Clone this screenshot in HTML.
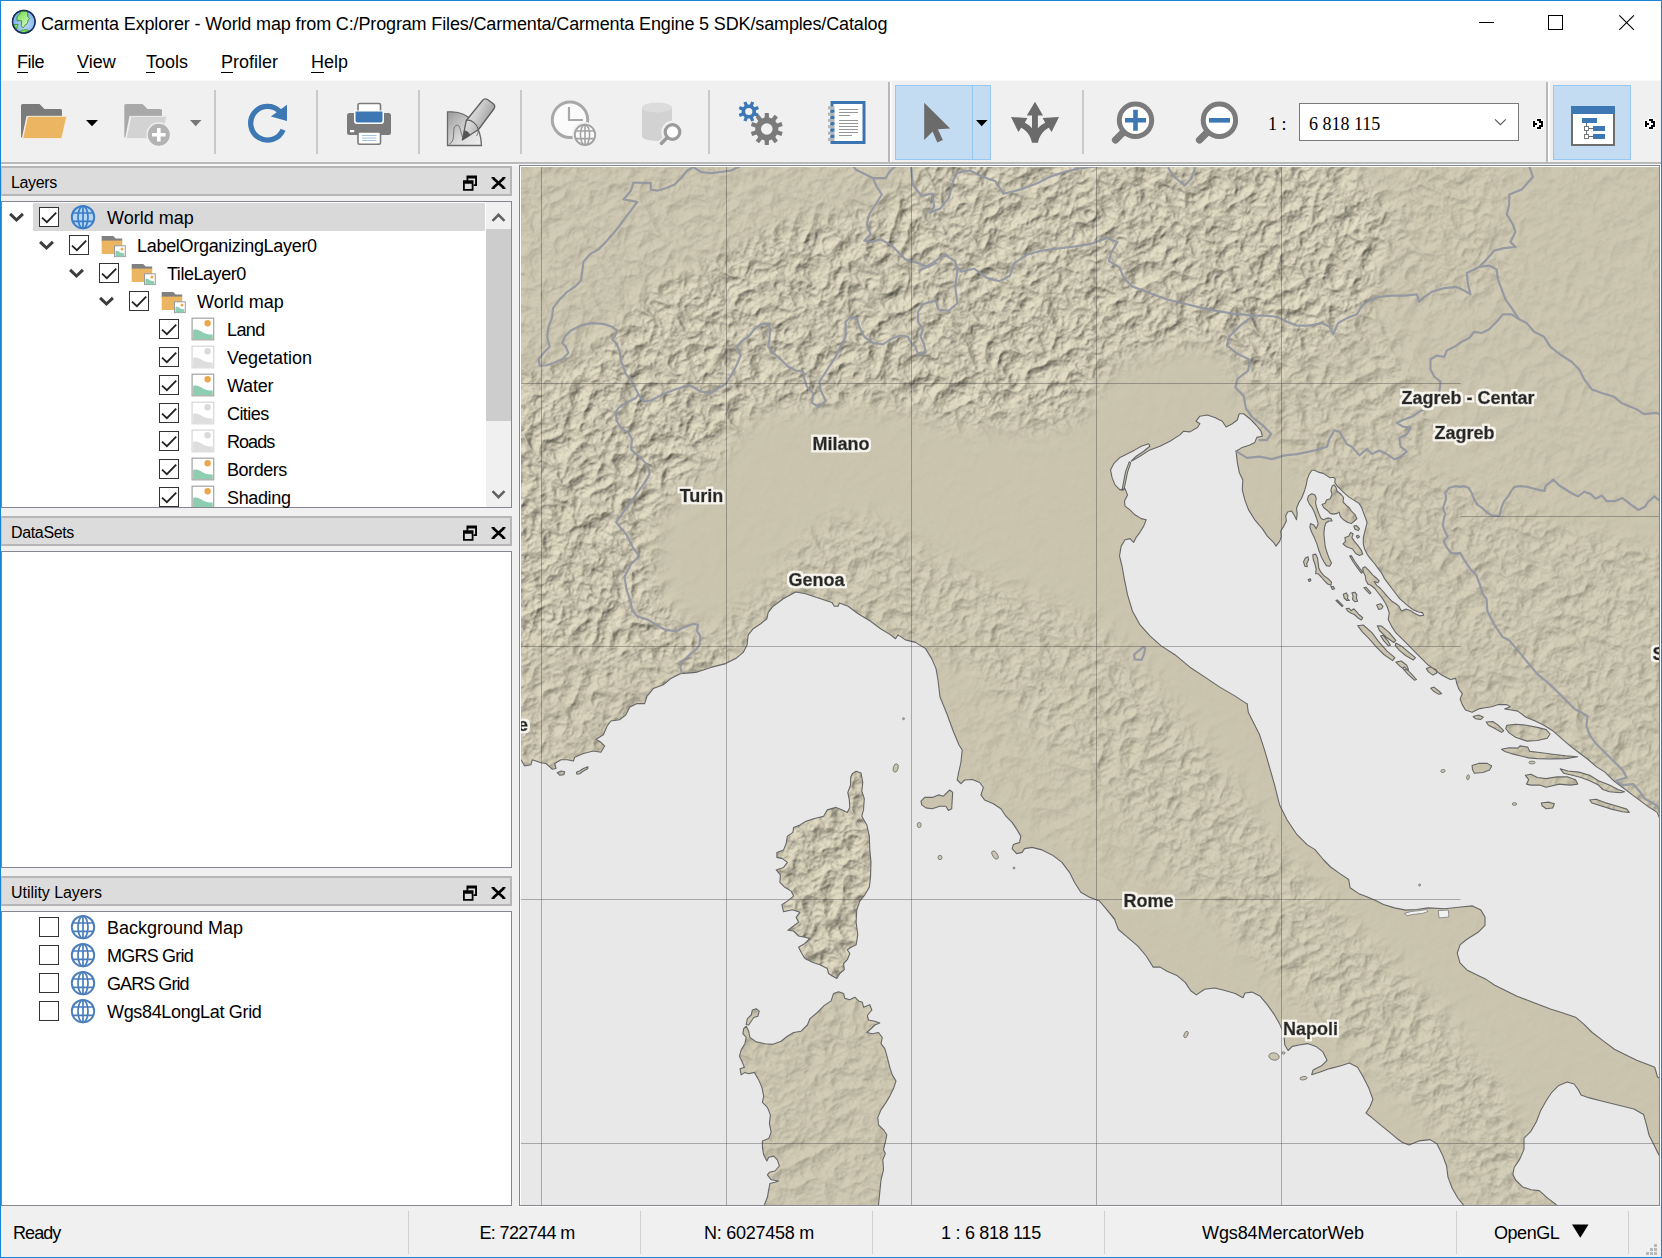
<!DOCTYPE html>
<html>
<head>
<meta charset="utf-8">
<title>Carmenta Explorer</title>
<style>
*{box-sizing:border-box;margin:0;padding:0}
html,body{width:1662px;height:1258px;overflow:hidden;background:#f0f0f0}
body{position:relative;font-family:"Liberation Sans",sans-serif;font-size:18px;color:#000}
.abs{position:absolute}
#win{position:absolute;left:0;top:0;width:1662px;height:1258px;border:1px solid #1883d7;background:#f0f0f0}
#titlebar{position:absolute;left:1px;top:1px;width:1660px;height:79px;background:#fff}
#title{position:absolute;left:41px;top:13px;font-size:18px;line-height:22px;white-space:nowrap;letter-spacing:-0.14px}
.menu{position:absolute;top:51px;font-size:18px;line-height:22px;white-space:nowrap}
.menu u{text-decoration:none;border-bottom:1px solid #000;padding-bottom:0px}
#tbline{position:absolute;left:1px;top:80px;width:1660px;height:1px;background:#f8f8f8}
.sep{position:absolute;top:90px;width:2px;height:64px;background:#c9c9c9}
.tbend{position:absolute;top:82px;width:2px;height:80px;background:#b9b9b9}
.tbend2{position:absolute;top:82px;width:2px;height:80px;background:#fbfbfb}
.actbtn{position:absolute;top:85px;height:75px;background:#c3dcf2;border:1px solid #93c8f5}
.dtitle{position:absolute;left:1px;width:511px;height:30px;background:#dcdcdc;border:2px solid #b6b6b6;border-left:1px solid #c6c6c6}
.dtitle span{position:absolute;left:9px;top:5px;font-size:16px;line-height:20px;letter-spacing:-0.35px}
.dbox{position:absolute;left:1px;width:511px;background:#fff;border:1px solid #828790}
.row{position:absolute;height:28px;line-height:28px;font-size:18px;white-space:nowrap;margin-top:1px}
.cb{position:absolute;width:20px;height:20px;border:1px solid #333;background:#fff}
.stat{position:absolute;top:1222px;font-size:18px;line-height:22px;white-space:nowrap}
.ssep{position:absolute;top:1211px;width:1px;height:43px;background:#d0d0d0}
svg{position:absolute;overflow:visible}
</style>
</head>
<body>
<div id="win"></div>
<div id="titlebar"></div>
<!-- TITLE -->
<div id="title">Carmenta Explorer - World map from C:/Program Files/Carmenta/Carmenta Engine 5 SDK/samples/Catalog</div>
<!--APPICON-->
<!--WINCTRL-->
<!-- MENU -->
<div class="menu" style="left:17px;letter-spacing:-0.5px"><u>F</u>ile</div>
<div class="menu" style="left:77px"><u>V</u>iew</div>
<div class="menu" style="left:146px"><u>T</u>ools</div>
<div class="menu" style="left:221px"><u>P</u>rofiler</div>
<div class="menu" style="left:311px"><u>H</u>elp</div>
<div id="tbline"></div>
<!--TOOLBAR-->
<div class="abs" style="left:1px;top:162px;width:1660px;height:2px;background:#b9b9b9"></div>
<div class="abs" style="left:1px;top:164px;width:1660px;height:2px;background:#f7f7f7"></div>
<div class="sep" style="left:214px"></div>
<div class="sep" style="left:316px"></div>
<div class="sep" style="left:418px"></div>
<div class="sep" style="left:520px"></div>
<div class="sep" style="left:708px"></div>
<div class="sep" style="left:1082px"></div>
<div class="tbend" style="left:888px"></div><div class="tbend2" style="left:890px"></div>
<div class="tbend" style="left:1546px"></div><div class="tbend2" style="left:1548px"></div>
<div class="actbtn" style="left:895px;width:96px"></div>
<div class="abs" style="left:972px;top:86px;width:1px;height:73px;background:#93c8f5"></div>
<div class="actbtn" style="left:1553px;width:78px"></div>
<div class="abs" style="left:1268px;top:113px;font-family:'Liberation Serif',serif;font-size:18px;line-height:22px">1 :</div>
<div class="abs" style="left:1299px;top:103px;width:220px;height:38px;background:#fff;border:1px solid #7a7a7a"></div>
<div class="abs" style="left:1309px;top:113px;font-family:'Liberation Serif',serif;font-size:18px;line-height:22px;white-space:nowrap">6 818 115</div>
<svg style="left:0;top:0" width="1662" height="170" viewBox="0 0 1662 170">
<defs>
<linearGradient id="gpap" x1="0" y1="0" x2="1" y2="1"><stop offset="0" stop-color="#9a9a9a"/><stop offset="0.6" stop-color="#dcdcdc"/><stop offset="1" stop-color="#efefef"/></linearGradient>
<linearGradient id="gpen" x1="0" y1="0" x2="1" y2="0.6"><stop offset="0" stop-color="#f4f4f4"/><stop offset="0.5" stop-color="#cfcfcf"/><stop offset="1" stop-color="#8e8e8e"/></linearGradient>
</defs>
<!-- open folder -->
<path d="M21,105.5 a1.5,1.5 0 0 1 1.5,-1.5 H39.5 L44.5,109 H60.5 a1.5,1.5 0 0 1 1.5,1.5 V116 H26.5 L22,137.5 H21 Z" fill="#7b7b7b"/>
<path d="M27.6,116.3 H66.8 L61.7,138.6 H22.7 Z" fill="#ecb562" stroke="#f6f2ea" stroke-width="0.8"/>
<path d="M86,120 H98 L92,126.3 Z" fill="#000"/>
<!-- add folder disabled -->
<path d="M124.3,105.5 a1.5,1.5 0 0 1 1.5,-1.5 H142.5 L147.5,109 H160.5 a1.5,1.5 0 0 1 1.5,1.5 V116 H129.5 L125.3,137.5 H124.3 Z" fill="#a9a9a9"/>
<path d="M131,116.3 H166.8 L162,138.6 H126.2 Z" fill="#d3d3d3" stroke="#f0f0f0" stroke-width="0.8"/>
<circle cx="158.8" cy="134.8" r="12.5" fill="#f0f0f0"/>
<circle cx="158.8" cy="134.8" r="11" fill="#b3b3b3"/>
<path d="M152,134.8 H165.6 M158.8,128 V141.6" stroke="#fff" stroke-width="3.6"/>
<path d="M190,120 H201.5 L195.7,126.3 Z" fill="#777"/>
<!-- refresh -->
<path d="M283.1,129.7 A16.85,16.85 0 1 1 279.5,111.3" fill="none" stroke="#3d78b5" stroke-width="5.3"/>
<path d="M287,104.8 V121 L270.8,116.6 Z" fill="#3d78b5"/>
<!-- printer -->
<rect x="358" y="103.5" width="22.5" height="12" rx="1.5" fill="#fff" stroke="#7b7b7b" stroke-width="1.6"/>
<rect x="347" y="113" width="44" height="22" rx="2.5" fill="#7b7b7b"/>
<path d="M354,110.5 H384 V121 a3,3 0 0 1 -3,3 H357 a3,3 0 0 1 -3,-3 Z" fill="#fff"/>
<path d="M355.5,111.5 H382.5 V120.5 a2,2 0 0 1 -2,2 H357.5 a2,2 0 0 1 -2,-2 Z" fill="#3d78b5"/>
<rect x="350" y="130" width="4.2" height="2.2" fill="#fff"/>
<rect x="358" y="132" width="22.5" height="12.3" rx="1.5" fill="#fff" stroke="#7b7b7b" stroke-width="1.6"/>
<path d="M362,135.5 H376.5 M362,138 H376.5 M362,140.5 H376.5" stroke="#8fb4dd" stroke-width="0.8"/>
<!-- edit -->
<path d="M447.5,111.8 H452 C468,112 481,125 481.5,145.5 H447.5 Z" fill="url(#gpap)" stroke="#6a6a6a" stroke-width="1.3"/>
<path d="M449,144.5 C457,140 451,128 456,125.5 C461,123 460,134 463.5,139" fill="none" stroke="#6a6a6a" stroke-width="0.9"/>
<path d="M476.5,136 C479,132 478,130 476,130" fill="none" stroke="#6a6a6a" stroke-width="0.9"/>
<path d="M462.3,140 L466.3,120.5 L482.5,100.5 a4,4 0 0 1 5,-1 L493,103.5 a4,4 0 0 1 1.2,5 L478.5,129.5 Z" fill="url(#gpen)" stroke="#5e5e5e" stroke-width="1.3" stroke-linejoin="round"/>
<path d="M466.3,120.5 C471,119 477,124 478.5,129.5" fill="none" stroke="#5e5e5e" stroke-width="1.2"/>
<path d="M462.3,140 L464.3,130.5 C467,130.5 469.5,132.5 470.3,135.5 Z" fill="#555"/>
<!-- clock+globe disabled -->
<circle cx="570" cy="119.8" r="17.7" fill="#fbfbfb" stroke="#a8a8a8" stroke-width="3"/>
<path d="M569,107 V120 H583" fill="none" stroke="#a8a8a8" stroke-width="2.2"/>
<circle cx="585" cy="134.8" r="12.8" fill="#f0f0f0"/>
<circle cx="585" cy="134.8" r="10.2" fill="#fbfbfb" stroke="#a3a3a3" stroke-width="1.9"/>
<ellipse cx="585" cy="134.8" rx="4.6" ry="10.2" fill="none" stroke="#a3a3a3" stroke-width="1.6"/>
<path d="M585,124.6 V145 M575.6,131 H594.4 M575.6,138.6 H594.4" stroke="#a3a3a3" stroke-width="1.6" fill="none"/>
<!-- db+search disabled -->
<path d="M642,107.5 V136 C642,142.5 672,142.5 672,136 V107.5 Z" fill="#d2d2d2"/>
<ellipse cx="657" cy="107.5" rx="15" ry="5" fill="#dcdcdc"/>
<circle cx="672.5" cy="132" r="11.2" fill="#f0f0f0"/>
<path d="M666.5,138.5 L661,144" stroke="#f0f0f0" stroke-width="7" stroke-linecap="round"/>
<circle cx="672.5" cy="132" r="7.3" fill="#fdfdfd" stroke="#9b9b9b" stroke-width="3.2"/>
<path d="M667,137.8 L661.5,143.3" stroke="#9b9b9b" stroke-width="3.6" stroke-linecap="round"/>
<!-- gears -->
<g id="gears"><path d="M758.9,113.9 L757.7,116.9 L754.6,115.7 L753.0,117.3 L754.2,120.4 L751.2,121.6 L749.9,118.6 L747.7,118.6 L746.4,121.6 L743.4,120.4 L744.6,117.3 L743.0,115.7 L739.9,116.9 L738.7,113.9 L741.7,112.6 L741.7,110.4 L738.7,109.1 L739.9,106.1 L743.0,107.3 L744.6,105.7 L743.4,102.6 L746.4,101.4 L747.7,104.4 L749.9,104.4 L751.2,101.4 L754.2,102.6 L753.0,105.7 L754.6,107.3 L757.7,106.1 L758.9,109.1 L755.9,110.4 L755.9,112.6 Z M745.2,111.5 a3.6,3.6 0 1 0 7.2,0 a3.6,3.6 0 1 0 -7.2,0 Z" fill="#3d78b5" fill-rule="evenodd"/><path d="M782.7,132.0 L781.5,135.9 L777.0,134.6 L775.3,136.9 L777.9,140.8 L774.6,143.2 L771.7,139.5 L769.0,140.4 L768.8,145.1 L764.8,145.1 L764.6,140.4 L761.9,139.5 L759.0,143.2 L755.7,140.8 L758.3,136.9 L756.6,134.6 L752.1,135.9 L750.9,132.0 L755.3,130.5 L755.3,127.5 L750.9,126.0 L752.1,122.1 L756.6,123.4 L758.3,121.1 L755.7,117.2 L759.0,114.8 L761.9,118.5 L764.6,117.6 L764.8,112.9 L768.8,112.9 L769.0,117.6 L771.7,118.5 L774.6,114.8 L777.9,117.2 L775.3,121.1 L777.0,123.4 L781.5,122.1 L782.7,126.0 L778.3,127.5 L778.3,130.5 Z M761.0,129.0 a5.8,5.8 0 1 0 11.6,0 a5.8,5.8 0 1 0 -11.6,0 Z" fill="#7b7b7b" fill-rule="evenodd"/></g>
<!-- notebook -->
<rect x="832" y="102.5" width="32" height="40" fill="#fff" stroke="#3a74b1" stroke-width="3"/>
<path d="M831.5,107 V140" stroke="#fff" stroke-width="6" stroke-dasharray="3.2 3.1"/>
<path d="M831.5,107 V140" stroke="#a9a9a9" stroke-width="6.5" stroke-dasharray="3.2 3.1" stroke-dashoffset="3.15" opacity="0.0"/>
<g fill="#b5b5b5"><rect x="828" y="106.3" width="6.5" height="3.2"/><rect x="828" y="112.6" width="6.5" height="3.2"/><rect x="828" y="118.9" width="6.5" height="3.2"/><rect x="828" y="125.2" width="6.5" height="3.2"/><rect x="828" y="131.5" width="6.5" height="3.2"/><rect x="828" y="137.8" width="6.5" height="3.2"/></g>
<g fill="#3a74b1"><rect x="830.5" y="109.5" width="4" height="3.1"/><rect x="830.5" y="115.8" width="4" height="3.1"/><rect x="830.5" y="122.1" width="4" height="3.1"/><rect x="830.5" y="128.4" width="4" height="3.1"/><rect x="830.5" y="134.7" width="4" height="3.1"/></g>
<path d="M839,109.5 H858 M839,112.5 H858 M839,115.5 H850 M839,120.5 H858 M839,123.5 H858 M839,126.5 H858 M839,129.5 H858 M839,132.5 H858 M839,135.5 H852" stroke="#8a8a8a" stroke-width="0.9"/>
<!-- cursor -->
<path d="M924.2,102.8 V140 L932.6,131.5 L937.3,142.6 L942.9,140 L937.8,129.3 L950.2,128.5 Z" fill="#6b6b6b"/>
<path d="M976,120 H987.5 L981.7,126.3 Z" fill="#000"/>
<!-- 3-way arrows -->
<g fill="#6b6b6b" stroke="none"><path d="M1035,101.8 L1043,115.6 H1037.9 V128.2 C1040.5,125.5 1043,123.8 1045.2,122.8 L1042.6,118.1 L1059,117 L1051.6,132 L1048.8,127.8 C1044,130 1039.5,135 1037.9,142.8 H1032 C1030.5,135 1026,130 1021.2,127.8 L1018.4,132 L1011,117 L1027.4,118.1 L1024.8,122.8 C1027,123.8 1029.5,125.5 1032,128.2 V115.6 H1026.8 Z"/></g>
<!-- zoom in -->
<path d="M1124,131.5 L1115.5,140" stroke="#7b7b7b" stroke-width="7.2" stroke-linecap="round"/>
<circle cx="1135.5" cy="120.3" r="16.2" fill="#fff" stroke="#7b7b7b" stroke-width="5"/>
<path d="M1125,120.3 H1146 M1135.5,109.8 V130.8" stroke="#3d78b5" stroke-width="4.6"/>
<!-- zoom out -->
<path d="M1208,131.5 L1199.5,140" stroke="#7b7b7b" stroke-width="7.2" stroke-linecap="round"/>
<circle cx="1219.4" cy="120.3" r="16.2" fill="#fff" stroke="#7b7b7b" stroke-width="5"/>
<path d="M1209,120.3 H1230" stroke="#3d78b5" stroke-width="4.6"/>
<!-- combo chevron -->
<path d="M1495,119.3 L1500.4,124.7 L1505.8,119.3" fill="none" stroke="#555" stroke-width="1.1"/>
<!-- ext arrows -->
<g id="ext1"><rect x="1533" y="121" width="2" height="6" fill="#fff" stroke="#fff" stroke-width="2"/><rect x="1535" y="123" width="2" height="2" fill="#fff" stroke="#fff" stroke-width="2"/><rect x="1537" y="119" width="4" height="2" fill="#fff" stroke="#fff" stroke-width="2"/><rect x="1539" y="121" width="4" height="2" fill="#fff" stroke="#fff" stroke-width="2"/><rect x="1541" y="123" width="2" height="2" fill="#fff" stroke="#fff" stroke-width="2"/><rect x="1539" y="125" width="4" height="2" fill="#fff" stroke="#fff" stroke-width="2"/><rect x="1537" y="127" width="4" height="2" fill="#fff" stroke="#fff" stroke-width="2"/><rect x="1533" y="121" width="2" height="6" fill="#000"/><rect x="1535" y="123" width="2" height="2" fill="#000"/><rect x="1537" y="119" width="4" height="2" fill="#000"/><rect x="1539" y="121" width="4" height="2" fill="#000"/><rect x="1541" y="123" width="2" height="2" fill="#000"/><rect x="1539" y="125" width="4" height="2" fill="#000"/><rect x="1537" y="127" width="4" height="2" fill="#000"/></g>
<g transform="translate(112 0)"><rect x="1533" y="121" width="2" height="6" fill="#fff" stroke="#fff" stroke-width="2"/><rect x="1535" y="123" width="2" height="2" fill="#fff" stroke="#fff" stroke-width="2"/><rect x="1537" y="119" width="4" height="2" fill="#fff" stroke="#fff" stroke-width="2"/><rect x="1539" y="121" width="4" height="2" fill="#fff" stroke="#fff" stroke-width="2"/><rect x="1541" y="123" width="2" height="2" fill="#fff" stroke="#fff" stroke-width="2"/><rect x="1539" y="125" width="4" height="2" fill="#fff" stroke="#fff" stroke-width="2"/><rect x="1537" y="127" width="4" height="2" fill="#fff" stroke="#fff" stroke-width="2"/><rect x="1533" y="121" width="2" height="6" fill="#000"/><rect x="1535" y="123" width="2" height="2" fill="#000"/><rect x="1537" y="119" width="4" height="2" fill="#000"/><rect x="1539" y="121" width="4" height="2" fill="#000"/><rect x="1541" y="123" width="2" height="2" fill="#000"/><rect x="1539" y="125" width="4" height="2" fill="#000"/><rect x="1537" y="127" width="4" height="2" fill="#000"/></g>
<!-- tree window icon -->
<rect x="1572" y="107" width="42" height="38" fill="#fff" stroke="#6e6e6e" stroke-width="2"/>
<rect x="1571" y="106" width="44" height="8" fill="#3d78b5"/>
<rect x="1582" y="118" width="15" height="5" fill="#3d78b5"/>
<rect x="1593" y="126" width="12" height="5" fill="#3d78b5"/>
<rect x="1593" y="134" width="12" height="5" fill="#3d78b5"/>
<path d="M1586.5,123 V136.5 H1593 M1586.5,128.5 H1593" fill="none" stroke="#6e6e6e" stroke-width="1"/>
<rect x="1584.5" y="126.5" width="4" height="4" fill="#fff" stroke="#6e6e6e" stroke-width="0.9"/>
<rect x="1584.5" y="134.5" width="4" height="4" fill="#fff" stroke="#6e6e6e" stroke-width="0.9"/>
</svg>
<!--/TOOLBAR-->
<!--DOCKS-->
<div class="dtitle" style="top:166px"><span>Layers</span></div>
<div class="dtitle" style="top:516px"><span>DataSets</span></div>
<div class="dtitle" style="top:876px"><span style="letter-spacing:-0.05px">Utility Layers</span></div>
<div class="dbox" style="top:201px;height:307px"></div>
<div class="dbox" style="top:551px;height:317px"></div>
<div class="dbox" style="top:911px;height:295px"></div>
<div class="abs" style="left:33px;top:203px;width:452px;height:28px;background:#d9d9d9"></div>
<div class="abs" style="left:486px;top:202px;width:25px;height:305px;background:#f0f0f0"></div>
<div class="abs" style="left:486px;top:229px;width:25px;height:192px;background:#cdcdcd"></div>
<div class="row" style="left:107px;top:203px;">World map</div>
<div class="row" style="left:137px;top:231px;letter-spacing:-0.30px;">LabelOrganizingLayer0</div>
<div class="row" style="left:167px;top:259px;letter-spacing:-0.46px;">TileLayer0</div>
<div class="row" style="left:197px;top:287px;">World map</div>
<div class="row" style="left:227px;top:315px;letter-spacing:-0.60px;">Land</div>
<div class="row" style="left:227px;top:343px;">Vegetation</div>
<div class="row" style="left:227px;top:371px;letter-spacing:-0.20px;">Water</div>
<div class="row" style="left:227px;top:399px;letter-spacing:-0.57px;">Cities</div>
<div class="row" style="left:227px;top:427px;letter-spacing:-0.96px;">Roads</div>
<div class="row" style="left:227px;top:455px;letter-spacing:-0.46px;">Borders</div>
<div class="row" style="left:227px;top:483px;clip-path:inset(0 0 4px 0);letter-spacing:-0.36px;">Shading</div>
<div class="row" style="left:107px;top:913px">Background Map</div>
<div class="row" style="left:107px;top:941px;letter-spacing:-0.78px;">MGRS Grid</div>
<div class="row" style="left:107px;top:969px;letter-spacing:-0.93px;">GARS Grid</div>
<div class="row" style="left:107px;top:997px;letter-spacing:-0.33px;">Wgs84LongLat Grid</div>
<div class="stat" style="left:13px;letter-spacing:-0.92px">Ready</div>
<div class="ssep" style="left:408px"></div>
<div class="ssep" style="left:640px"></div>
<div class="ssep" style="left:872px"></div>
<div class="ssep" style="left:1104px"></div>
<div class="ssep" style="left:1456px"></div>
<div class="ssep" style="left:1628px"></div>
<div class="stat" style="left:409px;width:231px;text-align:center;padding-left:5px;letter-spacing:-0.64px">E: 722744 m</div>
<div class="stat" style="left:641px;width:231px;text-align:center;padding-left:5px;letter-spacing:-0.25px">N: 6027458 m</div>
<div class="stat" style="left:873px;width:231px;text-align:center;padding-left:5px;letter-spacing:-0.30px">1 : 6 818 115</div>
<div class="stat" style="left:1105px;width:351px;text-align:center;padding-left:5px;letter-spacing:-0.12px">Wgs84MercatorWeb</div>
<div class="stat" style="left:1494px;letter-spacing:-0.45px">OpenGL</div>
<svg style="left:0;top:0" width="1662" height="1258" viewBox="0 0 1662 1258"><path d="M466.5,175.5 h10.5 v10.5 h-3.5 v-1.8 h1.6 v-5.6 h-6.8 v2.2 h-1.8 Z" fill="#000"/><path d="M463.0,180.3 h10.5 v10.5 h-10.5 Z M464.8,183.8 v5.2 h6.9 v-5.2 Z" fill="#000" fill-rule="evenodd"/>
<path d="M493.0,178.0 l11,10 M493.0,188.0 l11,-10" stroke="#000" stroke-width="2.6" fill="none"/><path d="M491.5,177.7 h3 M502.5,177.7 h3 M491.5,188.3 h3 M502.5,188.3 h3" stroke="#000" stroke-width="1.4"/>
<path d="M466.5,525.5 h10.5 v10.5 h-3.5 v-1.8 h1.6 v-5.6 h-6.8 v2.2 h-1.8 Z" fill="#000"/><path d="M463.0,530.3 h10.5 v10.5 h-10.5 Z M464.8,533.8 v5.2 h6.9 v-5.2 Z" fill="#000" fill-rule="evenodd"/>
<path d="M493.0,528.0 l11,10 M493.0,538.0 l11,-10" stroke="#000" stroke-width="2.6" fill="none"/><path d="M491.5,527.7 h3 M502.5,527.7 h3 M491.5,538.3 h3 M502.5,538.3 h3" stroke="#000" stroke-width="1.4"/>
<path d="M466.5,885.5 h10.5 v10.5 h-3.5 v-1.8 h1.6 v-5.6 h-6.8 v2.2 h-1.8 Z" fill="#000"/><path d="M463.0,890.3 h10.5 v10.5 h-10.5 Z M464.8,893.8 v5.2 h6.9 v-5.2 Z" fill="#000" fill-rule="evenodd"/>
<path d="M493.0,888.0 l11,10 M493.0,898.0 l11,-10" stroke="#000" stroke-width="2.6" fill="none"/><path d="M491.5,887.7 h3 M502.5,887.7 h3 M491.5,898.3 h3 M502.5,898.3 h3" stroke="#000" stroke-width="1.4"/>
<path d="M492.5,220.8 l6,-6 l6,6" fill="none" stroke="#606060" stroke-width="2.4"/>
<path d="M492.5,491.2 l6,6 l6,-6" fill="none" stroke="#606060" stroke-width="2.4"/>
<clipPath id="treeclip"><rect x="3" y="202" width="483" height="305"/></clipPath><g clip-path="url(#treeclip)"><path d="M10.1,213.8 l6.4,6.2 l6.4,-6.2" fill="none" stroke="#3c3c3c" stroke-width="3"/><rect x="39.5" y="207.5" width="19" height="19" fill="#fff" stroke="#333" stroke-width="1"/><path d="M42.0,217.6 l4.9,4.6 l9.3,-9.6" fill="none" stroke="#222" stroke-width="1.8"/><circle cx="83" cy="217.2" r="11.2" fill="#b5d7f5" stroke="#3a7cc7" stroke-width="1.9"/><ellipse cx="83" cy="217.2" rx="5" ry="11.2" fill="none" stroke="#3a7cc7" stroke-width="1.7"/><path d="M83,206.0 V228.39999999999998 M73.0,213.0 H93.0 M73.0,221.39999999999998 H93.0" stroke="#3a7cc7" stroke-width="1.7" fill="none"/><path d="M40.1,241.8 l6.4,6.2 l6.4,-6.2" fill="none" stroke="#3c3c3c" stroke-width="3"/><rect x="69.5" y="235.5" width="19" height="19" fill="#fff" stroke="#333" stroke-width="1"/><path d="M72.0,245.6 l4.9,4.6 l9.3,-9.6" fill="none" stroke="#222" stroke-width="1.8"/><path d="M101.7,236.0 h11.5 l2.5,2.6 h6.5 v3 h-20.5 Z" fill="#808080"/><rect x="101.7" y="240.6" width="20.5" height="13.4" fill="#ecb562"/><rect x="114.5" y="245.8" width="10.8" height="10.8" fill="#fff" stroke="#9a9a9a" stroke-width="1"/><path d="M115.5,251.0 c3,-1 4,2.5 8.8,2.2 v3.4 h-8.8 Z" fill="#8fcdb1"/><circle cx="122.0" cy="249.0" r="1.5" fill="#e8a84c"/><path d="M70.1,269.8 l6.4,6.2 l6.4,-6.2" fill="none" stroke="#3c3c3c" stroke-width="3"/><rect x="99.5" y="263.5" width="19" height="19" fill="#fff" stroke="#333" stroke-width="1"/><path d="M102.0,273.6 l4.9,4.6 l9.3,-9.6" fill="none" stroke="#222" stroke-width="1.8"/><path d="M131.7,264.0 h11.5 l2.5,2.6 h6.5 v3 h-20.5 Z" fill="#808080"/><rect x="131.7" y="268.6" width="20.5" height="13.4" fill="#ecb562"/><rect x="144.5" y="273.8" width="10.8" height="10.8" fill="#fff" stroke="#9a9a9a" stroke-width="1"/><path d="M145.5,279.0 c3,-1 4,2.5 8.8,2.2 v3.4 h-8.8 Z" fill="#8fcdb1"/><circle cx="152.0" cy="277.0" r="1.5" fill="#e8a84c"/><path d="M100.1,297.8 l6.4,6.2 l6.4,-6.2" fill="none" stroke="#3c3c3c" stroke-width="3"/><rect x="129.5" y="291.5" width="19" height="19" fill="#fff" stroke="#333" stroke-width="1"/><path d="M132.0,301.6 l4.9,4.6 l9.3,-9.6" fill="none" stroke="#222" stroke-width="1.8"/><path d="M161.7,292.0 h11.5 l2.5,2.6 h6.5 v3 h-20.5 Z" fill="#808080"/><rect x="161.7" y="296.6" width="20.5" height="13.4" fill="#ecb562"/><rect x="174.5" y="301.8" width="10.8" height="10.8" fill="#fff" stroke="#9a9a9a" stroke-width="1"/><path d="M175.5,307.0 c3,-1 4,2.5 8.8,2.2 v3.4 h-8.8 Z" fill="#8fcdb1"/><circle cx="182.0" cy="305.0" r="1.5" fill="#e8a84c"/><rect x="159.5" y="319.5" width="19" height="19" fill="#fff" stroke="#333" stroke-width="1"/><path d="M162.0,329.6 l4.9,4.6 l9.3,-9.6" fill="none" stroke="#222" stroke-width="1.8"/><rect x="192.1" y="318.2" width="21.6" height="21.6" fill="#fff" stroke="#a9a9a9" stroke-width="1.3"/><path d="M193.1,329.9 c7,-2.5 9,5.5 19.6,4.5 v4.6 h-19.6 Z" fill="#8fcdb1"/><circle cx="207.6" cy="323.3" r="3.2" fill="#e8a84c"/><rect x="159.5" y="347.5" width="19" height="19" fill="#fff" stroke="#333" stroke-width="1"/><path d="M162.0,357.6 l4.9,4.6 l9.3,-9.6" fill="none" stroke="#222" stroke-width="1.8"/><rect x="192.1" y="346.2" width="21.6" height="21.6" fill="#fff" stroke="#dadada" stroke-width="1.3"/><path d="M193.1,357.9 c7,-2.5 9,5.5 19.6,4.5 v4.6 h-19.6 Z" fill="#dedede"/><circle cx="207.6" cy="351.3" r="3.2" fill="#dadada"/><rect x="159.5" y="375.5" width="19" height="19" fill="#fff" stroke="#333" stroke-width="1"/><path d="M162.0,385.6 l4.9,4.6 l9.3,-9.6" fill="none" stroke="#222" stroke-width="1.8"/><rect x="192.1" y="374.2" width="21.6" height="21.6" fill="#fff" stroke="#a9a9a9" stroke-width="1.3"/><path d="M193.1,385.9 c7,-2.5 9,5.5 19.6,4.5 v4.6 h-19.6 Z" fill="#8fcdb1"/><circle cx="207.6" cy="379.3" r="3.2" fill="#e8a84c"/><rect x="159.5" y="403.5" width="19" height="19" fill="#fff" stroke="#333" stroke-width="1"/><path d="M162.0,413.6 l4.9,4.6 l9.3,-9.6" fill="none" stroke="#222" stroke-width="1.8"/><rect x="192.1" y="402.2" width="21.6" height="21.6" fill="#fff" stroke="#dadada" stroke-width="1.3"/><path d="M193.1,413.9 c7,-2.5 9,5.5 19.6,4.5 v4.6 h-19.6 Z" fill="#dedede"/><circle cx="207.6" cy="407.3" r="3.2" fill="#dadada"/><rect x="159.5" y="431.5" width="19" height="19" fill="#fff" stroke="#333" stroke-width="1"/><path d="M162.0,441.6 l4.9,4.6 l9.3,-9.6" fill="none" stroke="#222" stroke-width="1.8"/><rect x="192.1" y="430.2" width="21.6" height="21.6" fill="#fff" stroke="#dadada" stroke-width="1.3"/><path d="M193.1,441.9 c7,-2.5 9,5.5 19.6,4.5 v4.6 h-19.6 Z" fill="#dedede"/><circle cx="207.6" cy="435.3" r="3.2" fill="#dadada"/><rect x="159.5" y="459.5" width="19" height="19" fill="#fff" stroke="#333" stroke-width="1"/><path d="M162.0,469.6 l4.9,4.6 l9.3,-9.6" fill="none" stroke="#222" stroke-width="1.8"/><rect x="192.1" y="458.2" width="21.6" height="21.6" fill="#fff" stroke="#a9a9a9" stroke-width="1.3"/><path d="M193.1,469.9 c7,-2.5 9,5.5 19.6,4.5 v4.6 h-19.6 Z" fill="#8fcdb1"/><circle cx="207.6" cy="463.3" r="3.2" fill="#e8a84c"/><rect x="159.5" y="487.5" width="19" height="19" fill="#fff" stroke="#333" stroke-width="1"/><path d="M162.0,497.6 l4.9,4.6 l9.3,-9.6" fill="none" stroke="#222" stroke-width="1.8"/><rect x="192.1" y="486.2" width="21.6" height="21.6" fill="#fff" stroke="#a9a9a9" stroke-width="1.3"/><path d="M193.1,497.9 c7,-2.5 9,5.5 19.6,4.5 v4.6 h-19.6 Z" fill="#8fcdb1"/><circle cx="207.6" cy="491.3" r="3.2" fill="#e8a84c"/></g>
<rect x="39.5" y="917.5" width="19" height="19" fill="#fff" stroke="#333" stroke-width="1"/>
<circle cx="83" cy="927.2" r="11.2" fill="#fff" stroke="#4a7ebb" stroke-width="1.9"/><ellipse cx="83" cy="927.2" rx="5" ry="11.2" fill="none" stroke="#4a7ebb" stroke-width="1.7"/><path d="M83,916.0 V938.4000000000001 M73.0,923.0 H93.0 M73.0,931.4000000000001 H93.0" stroke="#4a7ebb" stroke-width="1.7" fill="none"/>
<rect x="39.5" y="945.5" width="19" height="19" fill="#fff" stroke="#333" stroke-width="1"/>
<circle cx="83" cy="955.2" r="11.2" fill="#fff" stroke="#4a7ebb" stroke-width="1.9"/><ellipse cx="83" cy="955.2" rx="5" ry="11.2" fill="none" stroke="#4a7ebb" stroke-width="1.7"/><path d="M83,944.0 V966.4000000000001 M73.0,951.0 H93.0 M73.0,959.4000000000001 H93.0" stroke="#4a7ebb" stroke-width="1.7" fill="none"/>
<rect x="39.5" y="973.5" width="19" height="19" fill="#fff" stroke="#333" stroke-width="1"/>
<circle cx="83" cy="983.2" r="11.2" fill="#fff" stroke="#4a7ebb" stroke-width="1.9"/><ellipse cx="83" cy="983.2" rx="5" ry="11.2" fill="none" stroke="#4a7ebb" stroke-width="1.7"/><path d="M83,972.0 V994.4000000000001 M73.0,979.0 H93.0 M73.0,987.4000000000001 H93.0" stroke="#4a7ebb" stroke-width="1.7" fill="none"/>
<rect x="39.5" y="1001.5" width="19" height="19" fill="#fff" stroke="#333" stroke-width="1"/>
<circle cx="83" cy="1011.2" r="11.2" fill="#fff" stroke="#4a7ebb" stroke-width="1.9"/><ellipse cx="83" cy="1011.2" rx="5" ry="11.2" fill="none" stroke="#4a7ebb" stroke-width="1.7"/><path d="M83,1000.0 V1022.4000000000001 M73.0,1007.0 H93.0 M73.0,1015.4000000000001 H93.0" stroke="#4a7ebb" stroke-width="1.7" fill="none"/>
<path d="M1572,1224.5 h16.5 l-8.2,13.2 Z" fill="#000"/>
<rect x="1654" y="1244" width="3" height="3" fill="#b8b8b8"/><rect x="1650" y="1248" width="3" height="3" fill="#b8b8b8"/><rect x="1654" y="1248" width="3" height="3" fill="#b8b8b8"/><rect x="1646" y="1252" width="3" height="3" fill="#b8b8b8"/><rect x="1650" y="1252" width="3" height="3" fill="#b8b8b8"/><rect x="1654" y="1252" width="3" height="3" fill="#b8b8b8"/>
<defs><radialGradient id="gl" cx="0.55" cy="0.6" r="0.6"><stop offset="0" stop-color="#c4dcfa"/><stop offset="0.7" stop-color="#8dbbf0"/><stop offset="1" stop-color="#7fb0ea"/></radialGradient><linearGradient id="gland" x1="0.2" y1="0" x2="0.8" y2="1"><stop offset="0" stop-color="#78de4c"/><stop offset="1" stop-color="#d8f6cc"/></linearGradient></defs><circle cx="23.8" cy="21.8" r="11.3" fill="url(#gl)" stroke="#1b3060" stroke-width="1.3"/><path d="M20.2,11.1 L27.3,11 L27.6,13.6 L27.8,16.7 L29.6,18.5 L28.1,20.2 L27.6,22.3 L26.8,24.3 L25.3,24.8 L24.5,26.4 L23.3,27.4 L22,27.1 L21.2,25.8 L21.5,20.8 L19.2,20.5 L17.2,21 L16.9,18.2 L17.4,16.2 L18.9,14.4 L20.2,13.4 Z" fill="url(#gland)" stroke="#2d8f20" stroke-width="0.9" stroke-linejoin="round"/><path d="M14.4,24.6 L18.2,24.3 L17.2,26.4 L16.9,28.9 L15.6,28.1 L14.6,26.4 Z M20.2,31.4 L22.2,30.2 L25.8,29.7 L28.4,30.2 L27.3,31.4 L24.5,32.4 L22,32.4 Z" fill="#8ee462" stroke="#2d8f20" stroke-width="0.8" stroke-linejoin="round"/><circle cx="23.8" cy="21.8" r="11.3" fill="none" stroke="#1b3060" stroke-width="1.3"/>
<path d="M1479,22.5 h15" stroke="#000" stroke-width="1"/><rect x="1548.5" y="15.5" width="14" height="14" fill="none" stroke="#000" stroke-width="1"/><path d="M1619.3,15.3 l14.6,14.6 M1633.9,15.3 l-14.6,14.6" stroke="#000" stroke-width="1.1"/></svg>
<!--MAP-->
<svg style="left:519px;top:165px" width="1142" height="1042" viewBox="519 165 1142 1042">
<defs>
<clipPath id="mapclip"><rect x="521" y="167" width="1138" height="1038"/></clipPath>
<filter id="relief" filterUnits="userSpaceOnUse" x="280" y="-130" width="1620" height="1630" color-interpolation-filters="sRGB">
<feTurbulence type="turbulence" baseFrequency="0.045" numOctaves="5" seed="11" result="n"/>
<feDiffuseLighting in="n" surfaceScale="-3.1" diffuseConstant="1.0" lighting-color="#e8e1c9" result="lit"><feDistantLight azimuth="252" elevation="60"/></feDiffuseLighting>
</filter>
<filter id="mblur" filterUnits="userSpaceOnUse" x="400" y="50" width="1400" height="1300"><feGaussianBlur stdDeviation="11"/></filter>
<mask id="mtn" maskUnits="userSpaceOnUse" x="400" y="50" width="1400" height="1300"><rect x="400" y="50" width="1400" height="1300" fill="#000"/><g filter="url(#mblur)"><rect x="400" y="50" width="1400" height="1300" fill="#fff" opacity="0.03"/><path d="M500.0,390.0 L578.0,358.0 L620.0,328.0 L641.0,299.0 L683.0,278.0 L726.0,257.0 L768.0,232.0 L810.0,223.0 L865.0,215.0 L911.0,185.0 L940.0,150.0 L1340.0,150.0 L1392.0,215.0 L1375.0,300.0 L1335.0,340.0 L1290.0,365.0 L1255.0,385.0 L1237.0,365.0 L1225.0,350.0 L1200.0,340.0 L1170.0,347.0 L1140.0,356.0 L1110.0,365.0 L1095.0,383.0 L1075.0,420.0 L1042.0,428.0 L1000.0,420.0 L978.0,428.0 L936.0,419.0 L894.0,406.0 L852.0,402.0 L810.0,410.0 L768.0,406.0 L734.0,428.0 L717.0,461.0 L692.0,478.0 L662.0,508.0 L652.0,539.0 L654.0,581.0 L664.0,606.0 L686.0,627.0 L716.0,642.0 L690.0,662.0 L600.0,652.0 L500.0,642.0 Z" fill="#fff" opacity="0.92"/><path d="M500.0,642.0 L600.0,652.0 L690.0,662.0 L716.0,642.0 L735.0,650.0 L740.0,692.0 L640.0,747.0 L560.0,777.0 L500.0,782.0 Z" fill="#fff" opacity="0.60"/><path d="M500.0,150.0 L940.0,150.0 L911.0,185.0 L865.0,215.0 L810.0,223.0 L768.0,232.0 L726.0,257.0 L683.0,278.0 L641.0,299.0 L620.0,328.0 L578.0,358.0 L500.0,390.0 Z" fill="#fff" opacity="0.25"/><path d="M1340.0,150.0 L1700.0,150.0 L1700.0,520.0 L1520.0,500.0 L1440.0,440.0 L1392.0,330.0 L1392.0,215.0 Z" fill="#fff" opacity="0.10"/><path d="M1392.0,150.0 L1505.0,150.0 L1505.0,290.0 L1440.0,305.0 L1392.0,300.0 Z" fill="#fff" opacity="0.25"/><path d="M1240.0,380.0 L1285.0,368.0 L1335.0,340.0 L1375.0,300.0 L1392.0,330.0 L1440.0,440.0 L1400.0,470.0 L1340.0,470.0 L1290.0,450.0 L1250.0,420.0 Z" fill="#fff" opacity="0.45"/><path d="M700.0,650.0 L730.0,612.0 L768.0,583.0 L800.0,547.0 L835.0,517.0 L880.0,521.0 L936.0,558.0 L1000.0,585.0 L1090.0,618.0 L1160.0,690.0 L1230.0,780.0 L1290.0,860.0 L1370.0,940.0 L1440.0,1010.0 L1500.0,1085.0 L1550.0,1205.0 L1470.0,1205.0 L1440.0,1130.0 L1370.0,1070.0 L1290.0,990.0 L1200.0,900.0 L1120.0,810.0 L1040.0,730.0 L970.0,670.0 L900.0,645.0 L840.0,645.0 L790.0,685.0 L740.0,695.0 Z" fill="#fff" opacity="0.45"/><path d="M940.0,680.0 L1040.0,730.0 L1120.0,810.0 L1200.0,900.0 L1150.0,900.0 L1060.0,850.0 L980.0,780.0 Z" fill="#fff" opacity="0.16"/><path d="M1290.0,450.0 L1340.0,470.0 L1400.0,470.0 L1480.0,490.0 L1560.0,525.0 L1700.0,560.0 L1700.0,900.0 L1620.0,850.0 L1540.0,780.0 L1460.0,700.0 L1400.0,620.0 L1350.0,540.0 Z" fill="#fff" opacity="0.40"/><path d="M770.0,760.0 L880.0,760.0 L880.0,990.0 L770.0,990.0 Z" fill="#fff" opacity="0.90"/><path d="M730.0,1000.0 L900.0,1000.0 L900.0,1205.0 L730.0,1205.0 Z" fill="#fff" opacity="0.30"/></g></mask>
<filter id="halo" x="-10%" y="-30%" width="120%" height="160%"><feMorphology in="SourceAlpha" operator="dilate" radius="1.7" result="d"/><feGaussianBlur in="d" stdDeviation="0.6" result="b"/><feFlood flood-color="#f6f4ec"/><feComposite in2="b" operator="in" result="hl"/><feMerge><feMergeNode in="hl"/><feMergeNode in="hl"/><feMergeNode in="SourceGraphic"/></feMerge></filter>
</defs>
<rect x="519" y="165" width="1142" height="1042" fill="#fff"/><rect x="519.5" y="165.5" width="1140" height="1040" fill="#fff" stroke="#828790" stroke-width="1"/>
<g clip-path="url(#mapclip)">
<rect x="521" y="167" width="1138" height="1038" fill="#cbc5af"/>
<g mask="url(#mtn)"><g transform="rotate(-27 1090 686)"><rect x="280" y="-130" width="1620" height="1630" filter="url(#relief)" fill="#000"/></g></g>
<path d="M519.0,759.8 L521.0,759.8 L524.7,766.0 L531.0,764.7 L532.2,759.8 L536.0,761.0 L541.0,762.7 L546.0,763.5 L552.2,769.2 L556.0,768.5 L554.7,763.5 L561.0,759.8 L567.2,759.8 L573.4,761.0 L574.7,757.3 L583.4,753.5 L593.4,751.0 L600.9,752.3 L604.6,746.0 L600.9,742.3 L595.9,739.3 L603.4,734.8 L607.1,726.0 L610.9,721.0 L619.6,719.8 L625.9,714.8 L629.6,707.3 L637.1,703.6 L644.6,703.6 L647.1,696.1 L653.3,688.6 L663.3,684.8 L670.8,678.6 L680.8,673.6 L695.8,672.4 L710.8,667.4 L725.7,663.6 L735.7,658.6 L743.2,652.4 L747.0,644.9 L748.2,634.9 L753.2,628.7 L760.7,623.7 L766.9,618.7 L768.2,612.4 L773.2,606.2 L783.2,598.7 L795.7,592.0 L805.6,593.7 L820.6,598.7 L831.9,602.4 L834.4,606.2 L838.1,606.2 L839.4,602.9 L848.1,606.2 L858.1,613.7 L870.6,621.2 L880.6,628.7 L890.5,634.9 L895.5,638.7 L898.0,634.9 L905.5,639.9 L915.5,642.4 L925.5,648.6 L931.7,658.6 L936.0,668.6 L938.0,680.0 L940.0,697.0 L947.0,714.0 L953.0,730.5 L959.0,745.0 L962.2,750.0 L960.9,762.5 L958.4,773.7 L957.2,780.0 L960.9,783.7 L964.7,780.0 L972.2,779.5 L979.7,782.5 L983.4,787.5 L980.9,794.9 L984.6,799.9 L993.4,803.7 L1000.9,808.7 L1005.9,816.2 L1012.1,822.4 L1017.1,829.9 L1020.8,836.1 L1019.6,842.4 L1013.4,844.4 L1012.1,848.6 L1016.6,853.6 L1022.1,852.4 L1024.6,848.6 L1032.1,847.4 L1042.1,849.9 L1052.1,854.9 L1062.0,862.4 L1069.5,872.3 L1074.5,882.3 L1080.8,892.3 L1089.5,897.3 L1099.5,901.1 L1107.0,909.8 L1115.0,919.8 L1105.9,908.7 L1114.2,918.4 L1118.4,929.5 L1128.2,937.9 L1137.9,946.2 L1146.2,956.0 L1153.2,967.1 L1160.1,967.1 L1167.1,971.3 L1176.8,975.4 L1185.2,982.4 L1190.7,990.7 L1196.3,994.9 L1204.6,989.3 L1214.4,988.0 L1224.1,990.2 L1235.2,993.5 L1243.0,997.7 L1245.0,993.0 L1251.9,992.1 L1260.3,996.3 L1267.2,1004.6 L1274.2,1014.4 L1279.7,1024.1 L1283.9,1033.9 L1284.8,1045.0 L1288.1,1050.5 L1292.3,1046.4 L1299.2,1045.0 L1307.6,1043.6 L1315.9,1046.4 L1322.9,1051.9 L1327.0,1060.3 L1321.5,1065.8 L1313.1,1070.0 L1311.7,1074.7 L1320.1,1072.0 L1329.8,1068.6 L1340.9,1065.8 L1349.3,1063.1 L1357.6,1067.2 L1363.2,1077.0 L1368.8,1088.1 L1372.9,1099.2 L1370.2,1106.2 L1366.0,1113.1 L1371.5,1117.3 L1379.9,1124.3 L1388.2,1131.2 L1396.6,1138.2 L1402.1,1142.3 L1409.1,1145.1 L1418.8,1140.9 L1430.0,1139.6 L1436.9,1143.7 L1442.5,1154.9 L1446.6,1166.0 L1448.0,1177.1 L1452.2,1188.2 L1457.8,1198.0 L1463.3,1204.9 L1464.7,1213.3 L1463.0,1215.0 L510.0,1215.0 L510.0,760.0 Z M1670.1,1082.6 L1662.0,1079.8 L1657.5,1077.0 L1654.8,1067.3 L1647.8,1064.5 L1636.7,1060.3 L1625.5,1054.8 L1614.4,1049.2 L1603.3,1040.9 L1592.2,1032.5 L1583.8,1024.2 L1575.5,1017.2 L1561.5,1012.5 L1550.4,1008.9 L1539.3,1004.7 L1528.2,1000.5 L1517.0,996.3 L1505.9,990.8 L1494.8,985.2 L1486.4,979.6 L1478.1,975.5 L1466.9,969.9 L1460.0,962.9 L1457.2,953.2 L1460.0,944.9 L1466.9,939.3 L1478.1,932.3 L1485.0,925.4 L1485.0,917.0 L1480.9,910.1 L1472.5,905.9 L1458.6,907.3 L1444.7,908.7 L1428.0,907.9 L1416.9,909.5 L1405.7,910.1 L1394.6,907.9 L1383.5,904.5 L1375.1,900.3 L1366.8,896.7 L1358.4,893.4 L1350.1,887.8 L1348.7,879.5 L1340.3,873.9 L1330.6,867.0 L1323.7,860.0 L1315.0,849.6 L1307.0,844.6 L1297.0,834.7 L1287.0,819.7 L1279.5,804.7 L1274.5,784.7 L1269.5,767.2 L1264.5,749.8 L1259.6,734.8 L1253.3,722.3 L1248.3,712.3 L1247.1,703.6 L1247.3,704.1 L1234.8,695.9 L1219.8,687.1 L1204.9,677.1 L1189.9,667.2 L1174.9,654.7 L1161.2,645.9 L1149.9,635.9 L1139.9,624.7 L1132.4,611.0 L1127.5,594.7 L1124.5,579.8 L1122.0,566.0 L1119.5,556.0 L1121.2,546.1 L1125.0,539.8 L1130.0,538.6 L1133.7,542.3 L1136.2,537.3 L1139.9,532.3 L1143.7,526.1 L1146.2,519.8 L1141.2,518.6 L1134.9,514.8 L1130.0,509.9 L1125.0,506.1 L1124.5,501.1 L1127.5,494.9 L1125.0,488.6 L1120.0,489.9 L1115.0,484.9 L1112.0,477.4 L1110.5,469.9 L1113.7,463.7 L1120.0,457.4 L1127.5,453.7 L1134.9,449.9 L1141.2,446.2 L1148.7,443.7 L1149.9,446.2 L1143.7,451.2 L1136.2,456.2 L1131.2,461.2 L1139.9,456.2 L1149.9,449.9 L1159.9,446.2 L1169.9,441.2 L1179.9,434.9 L1183.6,431.2 L1189.9,431.9 L1197.4,427.5 L1199.9,423.7 L1196.1,421.2 L1199.9,416.2 L1207.4,415.0 L1214.8,417.5 L1222.3,421.2 L1226.1,427.0 L1232.3,423.7 L1237.3,420.0 L1239.3,413.7 L1243.6,413.7 L1249.8,418.7 L1256.0,425.0 L1261.0,431.2 L1262.3,436.2 L1256.8,437.4 L1254.8,442.4 L1249.8,444.9 L1242.3,447.4 L1236.1,451.2 L1237.3,462.4 L1239.3,472.4 L1242.8,479.9 L1242.3,489.9 L1244.8,499.9 L1248.6,509.9 L1254.8,519.8 L1262.3,528.6 L1267.3,536.1 L1273.5,542.3 L1276.0,546.1 L1279.8,541.1 L1281.3,536.3 L1280.6,531.2 L1283.8,526.1 L1286.4,521.0 L1285.7,516.0 L1287.6,512.1 L1291.4,510.9 L1294.0,514.7 L1296.5,519.8 L1297.2,513.4 L1296.5,508.3 L1299.1,502.0 L1301.6,498.2 L1304.2,491.8 L1306.1,485.4 L1307.3,479.1 L1309.3,474.0 L1311.8,470.2 L1314.3,470.2 L1318.2,472.1 L1323.2,473.4 L1327.1,475.9 L1330.2,477.8 L1333.4,477.2 L1335.3,479.1 L1334.7,482.3 L1336.6,485.4 L1339.8,488.6 L1343.6,492.4 L1348.7,496.9 L1353.8,500.1 L1358.9,503.2 L1361.4,507.1 L1363.3,512.1 L1365.2,517.2 L1367.1,522.3 L1365.9,527.4 L1364.6,532.5 L1363.3,537.6 L1363.3,543.9 L1364.6,549.0 L1367.1,554.1 L1370.3,558.6 L1374.1,563.0 L1377.9,568.1 L1381.7,573.2 L1384.3,578.3 L1388.1,583.4 L1391.9,588.5 L1395.7,593.5 L1399.6,598.6 L1404.0,602.4 L1408.5,606.3 L1413.5,610.1 L1418.6,612.0 L1422.4,612.6 L1423.7,615.2 L1419.9,615.9 L1414.8,613.4 L1409.7,610.3 L1405.9,609.1 L1402.1,610.8 L1400.8,610.1 L1398.9,606.3 L1395.7,603.7 L1391.9,601.2 L1388.1,597.4 L1384.3,592.9 L1380.5,588.5 L1376.7,585.3 L1374.1,581.5 L1377.9,582.7 L1379.2,580.8 L1376.7,578.3 L1372.8,575.1 L1369.0,570.7 L1365.2,566.8 L1362.7,568.1 L1363.3,571.9 L1365.2,575.7 L1365.9,580.2 L1367.8,584.0 L1370.9,585.3 L1374.8,588.5 L1378.6,593.5 L1381.7,597.4 L1384.9,602.2 L1387.1,606.5 L1389.3,613.1 L1388.2,619.6 L1391.5,626.1 L1395.8,632.7 L1402.4,639.2 L1408.9,645.7 L1415.4,652.3 L1422.0,658.8 L1428.5,665.3 L1435.0,669.7 L1441.6,675.1 L1450.3,679.5 L1455.7,678.4 L1456.8,683.9 L1459.0,689.3 L1462.3,693.7 L1460.1,699.1 L1462.3,704.6 L1465.5,710.0 L1472.1,712.2 L1478.6,708.9 L1485.1,707.8 L1491.7,706.7 L1498.2,704.6 L1506.9,704.6 L1510.2,706.7 L1504.7,708.9 L1511.3,710.0 L1517.8,711.1 L1526.5,717.6 L1535.2,720.9 L1544.0,725.2 L1552.7,730.7 L1561.4,738.3 L1570.1,745.9 L1578.8,752.5 L1587.5,759.0 L1596.2,766.6 L1604.9,772.1 L1613.7,780.8 L1622.4,787.3 L1631.1,793.9 L1639.8,800.4 L1648.5,806.9 L1657.2,812.4 L1659.4,817.8 L1670.3,820.0 Z M1670.1,1157.7 L1658.9,1154.9 L1653.4,1143.8 L1649.2,1135.5 L1646.4,1124.3 L1643.6,1114.6 L1633.9,1109.0 L1622.8,1106.2 L1611.6,1103.5 L1600.5,1100.7 L1589.4,1097.9 L1581.0,1095.1 L1578.2,1089.5 L1574.1,1084.0 L1567.1,1082.0 L1558.8,1085.4 L1551.8,1092.3 L1546.2,1100.7 L1540.7,1110.4 L1536.5,1121.5 L1530.9,1131.3 L1524.0,1138.2 L1524.0,1149.4 L1519.8,1159.1 L1514.2,1167.5 L1512.9,1174.4 L1515.6,1180.0 L1522.6,1186.9 L1530.9,1189.7 L1539.3,1190.6 L1547.6,1198.1 L1556.0,1204.5 L1561.5,1216.1 L1670.1,1216.1 Z M852.3,773.7 L856.1,771.2 L861.0,773.0 L862.8,782.5 L861.8,791.2 L864.3,798.7 L863.5,809.9 L861.8,816.2 L866.8,824.9 L869.3,836.1 L869.8,849.9 L871.0,862.4 L870.5,877.3 L869.3,887.3 L864.8,894.8 L859.8,901.1 L856.8,909.8 L856.1,922.3 L857.8,934.8 L856.1,944.8 L851.1,947.3 L847.3,949.8 L849.8,953.5 L847.3,959.7 L843.6,963.5 L844.3,969.7 L839.8,973.5 L836.8,978.5 L832.3,976.0 L828.6,973.5 L827.3,968.5 L819.9,964.7 L812.4,962.2 L804.9,958.5 L801.1,952.2 L798.6,947.3 L804.9,943.5 L809.9,938.5 L804.9,937.3 L798.6,936.0 L793.6,931.0 L787.9,930.3 L793.6,926.0 L798.6,922.3 L796.1,917.3 L799.9,912.3 L792.4,909.8 L783.6,911.8 L781.9,904.8 L787.4,901.1 L793.6,896.1 L791.1,891.1 L784.9,887.3 L779.9,882.3 L780.4,874.8 L776.2,869.9 L783.6,867.4 L787.4,862.4 L782.4,858.6 L776.9,857.4 L776.9,852.4 L783.6,849.9 L786.1,843.6 L787.4,836.1 L792.9,832.4 L793.6,827.4 L799.9,824.9 L806.1,821.2 L813.6,818.7 L823.6,816.2 L827.3,809.9 L836.1,807.4 L842.3,809.9 L847.3,812.4 L849.8,807.4 L849.3,799.9 L847.8,792.4 L850.6,785.0 L850.6,777.5 Z M921.0,801.2 L924.7,797.4 L932.2,797.4 L938.5,794.9 L943.4,796.2 L949.7,790.0 L952.7,792.4 L952.2,799.9 L951.7,808.7 L948.4,810.4 L945.9,806.2 L939.7,806.2 L932.2,808.7 L926.0,807.9 L921.7,804.9 Z M746.2,1024.5 L747.4,1018.7 L751.2,1015.0 L752.4,1010.0 L756.2,1008.7 L759.2,1011.2 L757.9,1016.2 L753.7,1017.5 L751.2,1021.2 L748.7,1025.0 Z M823.6,1005.9 L831.1,1000.9 L833.6,993.4 L838.6,991.7 L843.6,993.4 L844.8,998.4 L849.8,999.7 L854.8,997.2 L858.6,1000.9 L862.3,1002.2 L863.5,1007.2 L869.8,1004.7 L871.8,1010.0 L867.3,1015.5 L868.5,1020.0 L874.8,1021.2 L879.8,1023.0 L874.8,1025.0 L871.8,1028.0 L866.8,1032.5 L872.3,1033.7 L878.5,1032.5 L882.3,1037.5 L881.0,1043.7 L884.8,1048.7 L887.3,1057.4 L889.8,1067.4 L892.3,1074.9 L896.0,1081.1 L893.5,1088.6 L889.8,1096.1 L886.0,1102.4 L881.0,1109.9 L877.8,1117.4 L878.5,1124.8 L883.5,1129.8 L886.8,1134.8 L885.3,1142.3 L883.5,1149.8 L885.3,1153.6 L882.8,1159.8 L883.5,1169.8 L881.0,1179.8 L879.8,1192.3 L878.5,1204.7 L878.5,1217.2 L764.4,1217.2 L764.4,1204.7 L767.4,1197.3 L768.7,1189.8 L769.9,1183.5 L774.9,1182.3 L778.7,1181.0 L771.2,1179.8 L767.4,1174.8 L769.4,1172.3 L774.9,1171.0 L779.4,1166.0 L777.4,1159.8 L773.7,1156.1 L768.7,1157.3 L766.9,1161.0 L763.7,1154.8 L762.4,1147.3 L762.4,1141.1 L768.7,1138.6 L771.2,1132.3 L769.4,1123.6 L770.4,1114.9 L767.4,1107.4 L762.4,1102.4 L763.7,1096.1 L761.9,1087.4 L758.7,1079.9 L754.4,1072.4 L748.7,1073.7 L744.9,1072.4 L741.2,1074.9 L740.0,1068.7 L744.4,1067.4 L742.4,1062.4 L739.5,1056.2 L741.2,1049.9 L744.9,1043.7 L746.2,1037.5 L742.9,1033.7 L743.7,1028.7 L746.2,1026.2 L748.7,1031.2 L749.9,1037.5 L756.2,1041.9 L764.9,1043.7 L772.4,1044.4 L781.1,1041.2 L787.4,1036.2 L793.6,1032.5 L801.1,1031.2 L807.4,1025.0 L809.9,1018.7 L817.4,1012.5 L823.6,1006.2 Z M1122.0,490.4 L1124.0,489.4 L1127.5,472.4 L1130.7,462.9 L1129.2,461.9 L1125.5,471.9 Z M1322.0,504.5 L1325.2,503.2 L1326.4,500.1 L1330.2,498.8 L1332.1,494.3 L1330.9,490.5 L1332.1,486.1 L1334.1,484.8 L1336.0,487.3 L1337.2,491.2 L1341.0,494.3 L1343.6,497.5 L1343.0,502.0 L1346.1,505.2 L1349.3,507.7 L1351.2,510.9 L1355.0,514.7 L1356.9,518.5 L1354.4,521.0 L1351.2,523.6 L1347.4,522.3 L1343.6,519.8 L1340.4,516.6 L1339.1,512.1 L1337.2,513.4 L1333.4,514.1 L1330.2,513.4 L1327.1,510.2 L1323.9,507.7 Z M1307.3,499.4 L1308.6,495.6 L1311.8,493.7 L1315.0,495.0 L1316.2,498.2 L1315.6,503.2 L1316.9,508.3 L1318.8,513.4 L1320.7,517.9 L1323.2,519.8 L1327.7,517.9 L1330.9,518.5 L1332.1,521.0 L1329.0,521.0 L1325.8,523.0 L1324.5,527.4 L1323.9,533.8 L1324.5,540.1 L1325.2,546.5 L1327.1,552.8 L1329.0,557.9 L1331.5,563.0 L1329.6,566.2 L1326.4,565.6 L1323.9,561.7 L1321.3,556.7 L1318.8,550.3 L1316.9,543.9 L1314.3,537.6 L1311.8,532.5 L1309.9,527.4 L1310.5,523.6 L1313.7,524.9 L1316.2,528.7 L1318.2,523.6 L1316.2,517.2 L1314.3,512.1 L1311.8,507.1 L1309.3,503.9 Z M1312.8,554.8 L1315.6,554.1 L1317.5,557.9 L1318.2,563.0 L1318.8,568.1 L1320.7,571.9 L1323.9,575.7 L1328.3,578.9 L1331.5,582.1 L1330.9,585.3 L1327.7,584.0 L1324.5,580.8 L1321.3,577.0 L1318.2,573.8 L1315.6,573.8 L1316.2,569.4 L1315.0,564.3 L1313.3,559.8 Z M1303.5,561.7 L1305.4,557.9 L1308.0,556.7 L1308.6,559.8 L1306.7,563.7 L1307.3,566.8 L1304.8,566.2 Z M1308.2,579.6 L1310.5,578.9 L1310.8,580.8 L1309.0,581.5 Z M1330.9,586.6 L1333.4,586.6 L1334.7,588.7 L1332.4,589.5 Z M1343.0,543.9 L1345.5,541.4 L1344.9,537.6 L1348.7,536.3 L1350.6,532.5 L1353.1,533.8 L1351.9,537.6 L1354.4,541.4 L1357.6,545.2 L1361.4,550.3 L1362.7,554.1 L1359.5,555.4 L1355.7,553.5 L1352.5,549.0 L1349.3,547.8 L1346.1,546.5 Z M1353.8,526.1 L1356.3,525.5 L1359.5,528.7 L1358.2,530.6 L1355.0,529.3 Z M1356.3,536.1 L1358.2,535.3 L1359.5,536.9 L1357.6,538.2 Z M1349.7,556.0 L1351.2,555.6 L1355.0,561.7 L1359.5,568.1 L1362.7,571.9 L1361.4,573.2 L1357.6,568.1 L1353.1,561.7 Z M1343.3,594.2 L1346.1,592.9 L1348.0,595.5 L1347.4,598.6 L1349.3,600.5 L1346.8,600.5 L1344.2,598.0 Z M1351.9,592.9 L1355.0,592.3 L1356.9,594.8 L1356.3,598.0 L1357.6,601.2 L1355.0,601.8 L1352.5,599.3 L1353.1,596.1 Z M1336.0,600.5 L1337.2,599.9 L1343.0,605.6 L1342.1,606.5 Z M1363.9,587.8 L1365.9,587.2 L1370.9,592.9 L1369.7,593.8 Z M1346.1,608.8 L1348.7,608.2 L1351.2,610.7 L1353.8,608.8 L1356.3,611.4 L1358.9,614.5 L1362.7,617.7 L1361.4,620.0 L1357.6,617.7 L1354.4,614.5 L1351.2,613.3 L1348.0,611.4 Z M1376.7,605.0 L1380.5,603.7 L1383.0,606.3 L1381.7,608.8 L1378.6,609.4 Z M1506.9,725.2 L1515.6,724.2 L1526.5,725.2 L1537.4,727.4 L1546.1,729.6 L1550.1,734.0 L1547.2,738.3 L1537.4,740.5 L1526.5,741.1 L1515.6,737.2 L1509.1,732.9 L1505.8,728.5 Z M1486.2,722.0 L1492.8,721.5 L1498.2,725.2 L1503.7,730.7 L1501.5,732.4 L1494.9,728.5 L1488.4,725.2 Z M1501.5,749.2 L1509.1,747.7 L1517.8,748.1 L1520.0,745.9 L1527.6,747.0 L1529.8,751.4 L1539.6,752.5 L1552.7,754.2 L1565.7,755.7 L1577.7,756.8 L1565.7,758.6 L1550.5,759.0 L1537.4,758.6 L1528.7,757.9 L1520.0,755.7 L1511.3,753.6 L1504.7,751.4 Z M1472.1,765.5 L1478.6,763.4 L1487.3,763.4 L1491.7,766.0 L1489.5,769.9 L1483.0,772.5 L1474.3,773.2 L1472.5,769.5 Z M1525.4,775.3 L1530.9,774.3 L1537.4,777.5 L1546.1,778.6 L1557.0,776.9 L1567.9,776.9 L1575.5,779.7 L1577.7,784.1 L1570.1,785.1 L1559.2,784.1 L1550.5,786.2 L1546.1,787.3 L1539.6,785.1 L1530.9,785.1 L1526.5,784.1 L1528.7,779.7 Z M1560.3,768.8 L1567.9,771.0 L1578.8,772.1 L1589.7,775.3 L1598.4,780.8 L1609.3,785.1 L1618.0,789.5 L1624.5,791.7 L1620.2,792.8 L1609.3,791.7 L1602.8,789.5 L1598.4,785.1 L1589.7,780.8 L1581.0,777.5 L1572.3,775.3 L1563.6,773.2 Z M1541.3,803.0 L1548.3,802.1 L1554.4,803.7 L1552.7,808.0 L1546.1,808.7 L1542.2,805.8 Z M1589.7,800.0 L1596.2,799.3 L1604.9,802.6 L1615.8,805.8 L1626.7,809.1 L1629.3,812.4 L1622.4,811.7 L1611.5,809.1 L1600.6,805.8 L1591.9,803.0 Z M1473.2,716.5 L1478.6,715.0 L1483.4,717.2 L1480.8,719.4 L1475.3,718.7 Z M1357.7,625.7 L1363.2,625.0 L1371.9,632.7 L1378.4,641.4 L1387.1,651.2 L1394.8,657.7 L1392.6,660.6 L1383.9,654.5 L1376.2,646.8 L1368.6,638.1 L1362.1,631.6 Z M1377.3,625.7 L1381.7,626.1 L1389.3,632.7 L1395.8,640.3 L1393.7,642.5 L1386.0,637.0 L1379.5,630.5 Z M1395.8,643.1 L1402.4,646.8 L1408.9,652.3 L1415.4,657.7 L1413.3,659.9 L1405.6,655.5 L1399.1,650.1 L1395.4,645.7 Z M1395.8,662.1 L1401.3,661.0 L1406.7,665.3 L1408.5,669.7 L1404.6,669.7 L1400.2,666.4 Z M1402.4,668.0 L1404.6,667.1 L1411.1,673.6 L1416.5,679.5 L1414.4,680.2 L1407.8,674.1 Z M1426.3,668.6 L1430.7,667.1 L1436.1,669.7 L1436.8,673.0 L1432.9,675.1 L1428.5,671.9 Z M1430.7,688.2 L1434.0,687.1 L1439.4,691.5 L1441.6,693.7 L1438.3,694.1 L1433.3,691.0 Z M1380.6,635.9 L1383.2,635.3 L1388.2,641.4 L1390.4,645.3 L1388.2,645.7 L1383.9,640.9 Z M557.2,772.7 L561.0,771.0 L564.7,771.7 L563.9,774.7 L559.7,775.2 Z M576.4,772.2 L579.7,771.0 L583.4,768.5 L587.9,766.7 L587.9,768.5 L583.4,771.0 L579.7,773.7 L576.9,774.2 Z" fill="#e8e8e8" fill-rule="evenodd" stroke="#666" stroke-width="1.1" stroke-linejoin="round"/>
<g fill="#cbc5af" stroke="#6f6f6f" stroke-width="0.8"><ellipse cx="895.7" cy="768.0" rx="2.4" ry="4.3" transform="rotate(15 895.7 768.0)"/><ellipse cx="919.2" cy="825.0" rx="2.0" ry="2.6" transform="rotate(0 919.2 825.0)"/><ellipse cx="940.0" cy="857.5" rx="2.0" ry="2.2" transform="rotate(0 940.0 857.5)"/><ellipse cx="995.0" cy="855.0" rx="2.4" ry="4.6" transform="rotate(-30 995.0 855.0)"/><ellipse cx="1014.0" cy="868.0" rx="1.0" ry="1.0" transform="rotate(0 1014.0 868.0)"/><ellipse cx="903.5" cy="718.7" rx="1.0" ry="1.0" transform="rotate(0 903.5 718.7)"/><ellipse cx="1274.0" cy="1056.5" rx="5.2" ry="3.6" transform="rotate(10 1274.0 1056.5)"/><ellipse cx="1283.5" cy="1053.0" rx="1.5" ry="1.2" transform="rotate(0 1283.5 1053.0)"/><ellipse cx="1303.5" cy="1078.2" rx="3.6" ry="1.7" transform="rotate(-10 1303.5 1078.2)"/><ellipse cx="1186.0" cy="1034.5" rx="1.8" ry="3.4" transform="rotate(25 1186.0 1034.5)"/><ellipse cx="1419.6" cy="885.0" rx="1.0" ry="1.0" transform="rotate(0 1419.6 885.0)"/><ellipse cx="1443.0" cy="771.0" rx="2.2" ry="1.5" transform="rotate(-10 1443.0 771.0)"/><ellipse cx="1468.0" cy="777.3" rx="1.3" ry="2.6" transform="rotate(10 1468.0 777.3)"/><ellipse cx="1514.5" cy="804.0" rx="2.2" ry="1.4" transform="rotate(0 1514.5 804.0)"/><ellipse cx="1532.0" cy="762.5" rx="3.2" ry="1.4" transform="rotate(0 1532.0 762.5)"/></g>
<g fill="#f2f2f2" stroke="#6f6f6f" stroke-width="0.7"><path d="M1404.3,913.4 L1411.3,911.5 L1419.6,910.6 L1426.6,909.5 L1428.0,911.5 L1422.4,913.4 L1414.1,914.3 L1407.1,915.6 Z"/><path d="M1438.3,910.6 L1448.3,910.1 L1448.9,917.0 L1439.1,917.9 Z"/></g>
<g fill="none" stroke="#9196a1" stroke-width="2.2" stroke-linejoin="round" opacity="0.92"><path d="M693.3,167.0 L687.0,170.7 L680.8,178.2 L674.6,184.5 L665.8,188.2 L657.1,190.7 L650.8,189.5 L650.8,183.2 L633.4,182.5 L630.9,190.7 L623.4,199.5 L630.9,200.7 L637.1,202.0 L630.9,210.7 L625.9,216.9 L619.6,225.7 L613.4,233.2 L605.9,241.9 L598.4,249.4 L589.7,254.4 L583.4,261.9 L582.2,271.9 L580.9,280.6 L574.7,286.9 L567.2,291.8 L559.7,299.3 L553.0,308.1 L552.2,316.8 L548.5,326.8 L547.2,336.8 L549.7,346.8 L543.5,353.0 L538.5,359.3 L539.7,365.5 L546.0,365.5 L553.5,363.0 L562.2,359.3 L568.4,353.0 L565.9,346.8 L562.2,343.0 L564.7,336.8 L570.9,330.5 L580.9,325.6 L590.9,323.1 L603.4,323.8 L612.1,326.8 L617.1,330.5 L614.6,336.8 L612.1,339.3 L617.1,344.3 L619.6,351.8 L620.9,360.5 L623.4,366.8 L625.9,374.2 L630.9,379.2 L634.6,386.7 L638.4,394.2 L635.9,398.0 L625.9,403.0 L618.4,407.9 L615.4,412.9 L617.1,421.7 L620.9,427.9 L628.4,432.9 L632.1,439.2 L630.9,449.1 L635.9,454.1 L643.3,460.4 L648.3,466.6 L649.6,474.1 L645.8,481.1 L616.1,522.3 L626.6,534.9 L632.9,547.5 L639.3,556.0 L630.8,564.4 L624.5,577.0 L626.6,589.7 L630.8,602.3 L632.1,609.9 L637.1,616.2 L648.3,619.9 L657.1,625.4 L665.8,629.9 L675.8,631.2 L683.3,627.4 L693.3,623.7 L697.8,624.9 L697.0,631.2 L700.3,636.2 L699.5,644.9 L695.8,649.9 L690.8,653.6 L685.8,658.6 L680.8,662.4 L680.3,667.4 L682.0,673.6"/><path d="M638.4,394.2 L643.3,401.7 L650.8,400.5 L658.3,396.7 L665.8,393.0 L675.8,389.2 L683.3,386.7 L690.8,385.5 L700.8,391.7 L710.8,393.0 L718.3,388.0 L725.7,384.2 L732.0,374.2 L737.0,364.3 L740.7,355.5 L737.0,346.8 L740.7,341.8 L748.2,336.8 L754.5,329.3 L760.7,324.3 L768.2,323.8 L770.2,329.3 L769.4,339.3 L768.2,346.8 L773.2,353.0 L780.7,359.3 L788.2,366.8 L795.7,370.5 L803.1,371.7 L804.4,379.2 L806.9,386.7 L813.1,393.0 L811.9,403.0 L819.4,406.7 L825.6,400.5 L820.6,390.5 L819.4,381.7 L824.4,374.2 L830.6,364.3 L835.6,356.8 L840.6,346.8 L845.6,336.8 L845.6,321.8 L850.6,316.8 L856.8,318.1 L859.3,326.8 L864.3,336.8 L873.1,343.0 L883.0,344.3 L890.5,339.3 L900.5,335.5 L908.0,336.8 L910.5,341.8 L915.5,346.8 L918.0,354.3 L925.5,353.0 L924.2,344.3 L920.5,336.8 L923.0,329.3 L918.0,321.8 L918.0,311.8 L923.0,304.3 L930.5,301.8 L936.0,300.6 L938.3,309.5 L948.9,310.8 L957.3,303.2 L955.2,286.4 L957.3,271.6 L955.2,261.1 L944.7,254.8 L932.0,263.2 L919.4,270.4 L936.0,263.1 L928.0,266.9 L918.0,263.1 L905.5,259.4 L898.0,251.9 L890.5,244.4 L880.6,239.4 L870.6,241.9 L864.3,240.7 L870.6,234.4 L866.8,224.4 L869.3,214.4 L875.6,204.5 L881.8,194.5 L876.8,187.0 L873.1,178.2 L865.6,174.5 L855.6,169.5 L853.1,165.8"/><path d="M693.3,167.0 L700.8,172.0 L710.8,173.2 L720.8,172.0 L730.7,170.7 L740.7,165.8"/><path d="M873.1,178.2 L885.5,178.2 L889.3,172.0 L895.5,165.8"/><path d="M955.2,265.3 L961.5,271.6 L974.1,268.7 L986.8,277.9 L999.4,281.3 L1009.9,275.8 L1014.2,263.2 L1026.8,254.8 L1041.5,250.6 L1058.4,248.5 L1075.2,246.4 L1090.0,244.2 L1090.0,244.2 L1106.8,237.9 L1117.4,242.1 L1111.1,252.7 L1109.0,261.1 L1119.5,267.4 L1123.7,277.9 L1132.1,286.4 L1149.0,292.7 L1165.8,299.0 L1182.7,303.2 L1199.5,307.4 L1216.4,310.8 L1233.2,313.7 L1254.5,315.6 L1264.5,315.6 L1277.0,316.8 L1287.0,321.8 L1296.9,325.6 L1309.4,325.6 L1321.9,323.1 L1329.4,326.8 L1333.1,334.3 L1338.1,323.1 L1346.9,318.1 L1356.9,314.3 L1361.9,305.6 L1369.3,300.6 L1379.3,296.8 L1391.8,295.6 L1404.3,295.6 L1416.8,294.3 L1419.3,301.8 L1424.3,296.8 L1431.8,291.8 L1444.3,288.1 L1456.7,286.9 L1464.2,290.6 L1470.5,294.3 L1468.0,284.4 L1466.7,273.1 L1479.2,266.9 L1489.2,265.6 L1496.7,269.4 L1497.9,279.4 L1501.7,289.3 L1505.4,299.3 L1511.7,308.1 L1519.2,319.3 L1526.7,323.1 L1534.1,331.8 L1544.1,336.8 L1550.4,346.8 L1561.6,355.5 L1571.6,361.8 L1579.1,369.2 L1584.1,379.2 L1591.6,389.2 L1601.6,393.0 L1614.0,396.7 L1621.5,403.0 L1636.5,409.2 L1644.0,414.2 L1656.5,412.9 L1662.0,415.4"/><path d="M911.0,167.2 L913.1,185.3 L921.5,195.8 L932.0,193.7 L934.1,206.3 L929.9,212.7 L940.4,208.4 L948.9,197.9 L953.1,181.1 L957.3,172.6 L969.9,170.5 L982.6,176.8 L995.2,181.1 L1003.6,193.7 L1020.5,189.5 L1037.3,183.2 L1050.0,176.8 L1062.6,172.6 L1079.4,168.4 L1090.0,167.2 L1090.0,167.2 L1115.3,164.2"/><path d="M1167.9,167.2 L1174.2,176.8 L1184.8,185.3 L1191.1,179.0 L1195.3,167.2"/><path d="M1529.1,165.8 L1532.9,177.0 L1521.7,189.5 L1509.2,194.5 L1509.2,204.5 L1506.7,214.4 L1512.9,224.4 L1515.4,231.9 L1510.4,241.9 L1515.4,246.9 L1504.2,248.1 L1494.2,250.6 L1486.7,259.4 L1479.2,266.9"/><path d="M1258.5,440.1 L1266.9,440.1 L1271.1,433.8 L1262.7,425.4 L1252.2,417.0 L1245.9,408.5 L1243.7,395.9 L1235.3,387.5 L1237.4,379.0 L1248.0,370.6 L1250.1,360.1 L1237.4,353.8 L1226.9,345.3 L1229.0,336.9 L1241.6,324.3 L1252.2,316.7"/><path d="M1519.2,319.3 L1511.7,314.3 L1502.9,314.3 L1496.7,321.8 L1489.2,329.3 L1481.7,333.0 L1474.2,331.8 L1469.2,338.0 L1461.7,341.8 L1454.2,346.8 L1446.8,350.5 L1444.3,356.8 L1436.8,355.5 L1430.5,359.3 L1430.5,369.2 L1434.3,376.7 L1440.5,381.7 L1439.3,391.7 L1440.5,398.0 L1431.8,405.5 L1421.8,410.4 L1411.8,416.7 L1401.8,420.4 L1396.8,422.9 L1403.1,426.7 L1410.5,427.9 L1406.8,434.2 L1399.3,437.9 L1400.6,446.7 L1406.8,451.6 L1399.3,457.9 L1394.3,459.1 L1386.8,454.1 L1379.3,450.4 L1371.8,454.1 L1366.9,449.1 L1359.4,455.4 L1351.9,446.7 L1346.9,444.2 L1343.1,437.9 L1339.4,431.7 L1334.4,430.4 L1329.4,439.2 L1326.9,446.7 L1319.4,449.1 L1309.4,451.6 L1296.9,454.1 L1284.5,455.4 L1272.0,459.1 L1259.5,456.6 L1247.0,457.9 L1235.3,450.6"/><path d="M1670.3,502.0 L1659.1,500.4 L1654.4,496.4 L1648.0,502.0 L1644.8,506.8 L1638.5,510.0 L1630.5,504.4 L1622.6,498.0 L1614.6,501.2 L1606.7,501.2 L1601.9,495.6 L1595.5,498.8 L1590.8,494.1 L1584.4,491.7 L1578.1,496.4 L1571.7,493.3 L1565.3,489.3 L1559.0,485.3 L1553.4,479.7 L1549.4,482.9 L1545.5,486.1 L1544.7,490.9 L1539.9,490.1 L1533.5,488.5 L1527.2,486.9 L1520.8,486.1 L1514.5,486.9 L1511.3,490.9 L1508.1,496.4 L1504.1,501.2 L1501.7,506.8 L1500.2,513.1 L1499.4,516.3 L1492.2,515.5 L1486.6,512.3 L1482.7,508.4 L1477.1,504.4 L1473.9,498.8 L1471.5,492.5 L1468.4,487.7 L1463.6,486.1 L1460.4,486.9 L1455.6,486.1 L1449.3,487.7 L1445.3,492.5 L1446.1,498.8 L1444.5,503.6 L1442.9,508.4 L1445.3,513.9 L1443.7,519.5 L1442.9,525.9 L1445.3,532.2 L1447.7,537.0 L1443.7,541.0 L1446.1,546.5 L1450.9,552.9 L1455.6,553.7 L1460.4,552.9 L1462.8,557.6 L1466.8,564.0 L1471.5,570.4 L1476.3,575.1 L1478.7,581.5 L1481.1,587.9 L1482.7,594.2 L1486.6,599.0 L1487.3,610.9 L1493.9,624.0 L1502.6,637.0 L1509.1,640.3 L1515.6,647.9 L1526.5,661.0 L1537.4,674.1 L1550.5,684.9 L1561.4,695.8 L1574.5,708.9 L1581.0,712.2 L1587.5,716.5 L1586.4,726.3 L1589.7,735.0 L1596.2,743.8 L1604.9,752.5 L1613.7,761.2 L1622.4,769.9 L1626.7,777.5 L1615.8,780.8 L1622.4,785.1 L1633.3,784.1 L1639.8,791.7 L1644.2,798.2 L1657.2,805.8 L1660.5,814.6"/><path d="M1134.2,654.4 L1139.7,649.9 L1143.4,646.9 L1145.2,647.9 L1144.2,653.6 L1141.7,659.9 L1134.7,659.4 Z"/></g>
<path d="M541.5,167 V1205 M726.5,167 V1205 M911.5,167 V1205 M1096.5,167 V1205 M1281.5,167 V1205 M521,383.5 H1460.5 M521,646.5 H1460.5 M521,899.5 H1460.5 M521,1143.5 H1659 M1460.5,516.5 H1659" fill="none" stroke="#3c3c3c" stroke-width="1" opacity="0.38"/>
<g font-family="Liberation Sans, sans-serif" font-weight="bold" font-size="18" fill="#262626" stroke="#262626" stroke-width="0.55" text-anchor="middle" filter="url(#halo)">
<text x="841.0" y="450.0">Milano</text>
<text x="701.5" y="502.0">Turin</text>
<text x="816.5" y="586.0">Genoa</text>
<text x="1468.0" y="404.0">Zagreb - Centar</text>
<text x="1464.5" y="439.0">Zagreb</text>
<text x="1148.5" y="907.0">Rome</text>
<text x="1310.5" y="1035.0">Napoli</text>
<text x="528" y="731" text-anchor="end">Marseille</text>
<text x="1652.5" y="660" text-anchor="start">Sarajevo</text>
</g>
</g></svg>
<!--STATUS-->
</body>
</html>
